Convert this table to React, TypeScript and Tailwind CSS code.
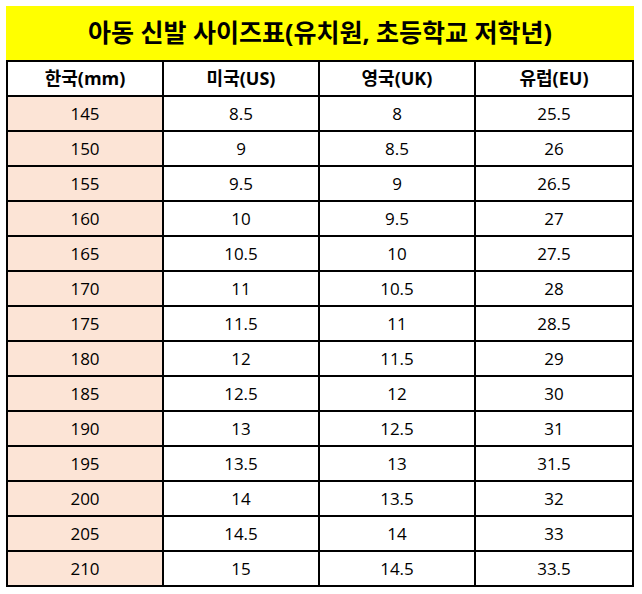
import React from 'react';

const rows: [string, string, string, string][] = [
  ['145', '8.5', '8', '25.5'],
  ['150', '9', '8.5', '26'],
  ['155', '9.5', '9', '26.5'],
  ['160', '10', '9.5', '27'],
  ['165', '10.5', '10', '27.5'],
  ['170', '11', '10.5', '28'],
  ['175', '11.5', '11', '28.5'],
  ['180', '12', '11.5', '29'],
  ['185', '12.5', '12', '30'],
  ['190', '13', '12.5', '31'],
  ['195', '13.5', '13', '31.5'],
  ['200', '14', '13.5', '32'],
  ['205', '14.5', '14', '33'],
  ['210', '15', '14.5', '33.5'],
];

const headers = ['한국(mm)', '미국(US)', '영국(UK)', '유럽(EU)'];

const font = { fontFamily: '"Open Sans", "Noto Sans CJK KR", sans-serif' };

const App: React.FC = () => {
  return (
    <div className="min-h-[594px] w-[642px] bg-white pl-[6px] pt-[6px] text-black" style={font}>
      <div className="w-[628px]">
        <div className="flex h-[54px] items-center justify-center bg-[#ffff00] text-[25px] font-bold">
          아동 신발 사이즈표(유치원, 초등학교 저학년)
        </div>

        <div className="border-2 border-black">
          <div className="grid h-[35px] grid-cols-4 border-b-2 border-black">
            {headers.map((h, i) => (
              <div
                key={h}
                className={`flex items-center justify-center text-[18px] font-bold ${i < 3 ? 'border-r-2 border-black' : ''}`}
              >
                {h}
              </div>
            ))}
          </div>

          {rows.map((r, ri) => (
            <div
              key={r[0]}
              className={`grid grid-cols-4 ${ri < rows.length - 1 ? 'h-[35px] border-b-2 border-black' : 'h-[33px]'}`}
            >
              {r.map((v, ci) => (
                <div
                  key={ci}
                  className={`flex items-center justify-center text-[17px] ${ci < 3 ? 'border-r-2 border-black' : ''} ${ci === 0 ? 'bg-[#fce4d6]' : ''}`}
                >
                  {v}
                </div>
              ))}
            </div>
          ))}
        </div>
      </div>
    </div>
  );
};

export default App;
